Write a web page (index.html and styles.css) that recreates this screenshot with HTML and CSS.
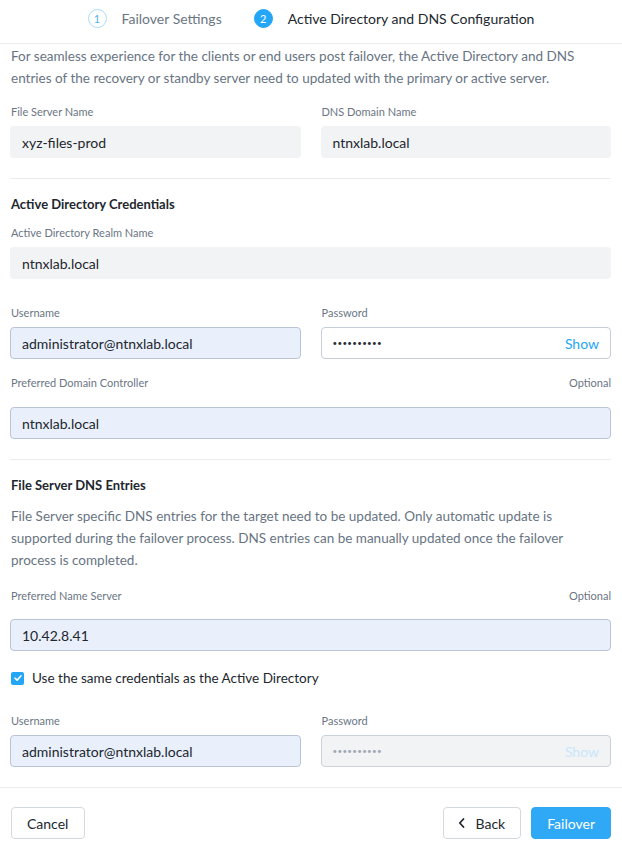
FILE: index.html
```html
<!DOCTYPE html>
<html>
<head>
<meta charset="utf-8">
<link rel="stylesheet" href="styles.css">
</head>
<body>
<div class="page">
  <header class="steps">
    <div class="step">
      <span class="step-num">1</span>
      <span class="step-label">Failover Settings</span>
    </div>
    <div class="step active">
      <span class="step-num">2</span>
      <span class="step-label">Active Directory and DNS Configuration</span>
    </div>
  </header>

  <main class="content">
    <p class="desc intro">For seamless experience for the clients or end users post failover, the Active Directory and DNS entries of the recovery or standby server need to updated with the primary or active server.</p>

    <div class="row first-row">
      <div class="field">
        <div class="label">File Server Name</div>
        <div class="input readonly">xyz-files-prod</div>
      </div>
      <div class="field">
        <div class="label">DNS Domain Name</div>
        <div class="input readonly">ntnxlab.local</div>
      </div>
    </div>

    <hr class="divider">

    <h3 class="section-title">Active Directory Credentials</h3>

    <div class="field single realm">
      <div class="label">Active Directory Realm Name</div>
      <div class="input readonly">ntnxlab.local</div>
    </div>

    <div class="row gap-top">
      <div class="field">
        <div class="label">Username</div>
        <div class="input filled">administrator@ntnxlab.local</div>
      </div>
      <div class="field">
        <div class="label">Password</div>
        <div class="input pass"><span class="dots">••••••••••</span><span class="show">Show</span></div>
      </div>
    </div>

    <div class="field single opt-field">
      <div class="label-row"><span class="label">Preferred Domain Controller</span><span class="label">Optional</span></div>
      <div class="input filled">ntnxlab.local</div>
    </div>

    <hr class="divider">

    <h3 class="section-title">File Server DNS Entries</h3>
    <p class="desc dns-desc">File Server specific DNS entries for the target need to be updated. Only automatic update is supported during the failover process. DNS entries can be manually updated once the failover process is completed.</p>

    <div class="field single opt-field ns">
      <div class="label-row"><span class="label">Preferred Name Server</span><span class="label">Optional</span></div>
      <div class="input filled">10.42.8.41</div>
    </div>

    <label class="check">
      <span class="box"><svg width="10" height="10" viewBox="0 0 10 10"><path d="M2 5.2 L4.1 7.2 L8 2.8" fill="none" stroke="#fff" stroke-width="1.6" stroke-linecap="round" stroke-linejoin="round"/></svg></span>
      <span class="check-text">Use the same credentials as the Active Directory</span>
    </label>

    <div class="row cred2">
      <div class="field">
        <div class="label">Username</div>
        <div class="input filled">administrator@ntnxlab.local</div>
      </div>
      <div class="field">
        <div class="label">Password</div>
        <div class="input pass disabled"><span class="dots">••••••••••</span><span class="show">Show</span></div>
      </div>
    </div>
  </main>

  <footer class="footer">
    <button class="btn cancel">Cancel</button>
    <div class="footer-right">
      <button class="btn back"><svg width="10" height="12" viewBox="0 0 10 12"><path d="M6.5 2 L2.8 6 L6.5 10" fill="none" stroke="#22272e" stroke-width="1.8" stroke-linecap="round" stroke-linejoin="round"/></svg>Back</button>
      <button class="btn primary">Failover</button>
    </div>
  </footer>
</div>
</body>
</html>
```

FILE: styles.css
```css
* { box-sizing: border-box; }
html, body { margin: 0; padding: 0; background: #fff; }
body {
  font-family: Lato, "Open Sans", sans-serif;
  color: #22272e;
  width: 622px;
  height: 857px;
  overflow: hidden;
}
.page { display: flex; flex-direction: column; }

.steps {
  height: 44px;
  border-bottom: 1px solid #ececec;
  display: flex;
  align-items: center;
  justify-content: center;
  gap: 32px;
  padding-left: 0;
  padding-bottom: 6px;
}
.step { display: flex; align-items: center; gap: 15px; }
.step-num {
  width: 19px; height: 19px;
  border-radius: 50%;
  border: 1px solid #abdcfb;
  color: #4cb3f5;
  font-size: 11px;
  display: flex; align-items: center; justify-content: center;
}
.step-label { font-size: 14px; color: #6b7684; }
.step.active .step-num { background: #23a6f5; border-color: #23a6f5; color: #fff; }
.step.active .step-label { color: #22272e; }

.content { padding: 0 11px 0 10px; display: flex; flex-direction: column; }

.desc {
  margin: 0;
  font-size: 13.5px;
  line-height: 22px;
  color: #687482;
  padding-left: 1px;
}
.intro { margin-top: 1px; }

.row { display: flex; gap: 20px; }
.row .field { flex: 1; }
.first-row { margin-top: 16px; }

.label {
  font-size: 11px;
  line-height: 14px;
  color: #6b7684;
  padding-left: 1px;
}
.field .label { display: block; margin-bottom: 7px; }
.label-row { display: flex; justify-content: space-between; margin-bottom: 17px; }
.label-row .label { margin-bottom: 0; }

.input {
  height: 32px;
  border-radius: 4px;
  border: 1px solid transparent;
  font-size: 14px;
  padding: 0 11px;
  display: flex;
  align-items: center;
  color: #22272e;
}
.input.readonly { background: #f2f3f5; }
.input.filled { background: #e9f0fc; border-color: #b9c4d6; }
.input.pass { background: #fff; border-color: #c8ced7; justify-content: space-between; }
.dots { font-size: 8px; letter-spacing: 0.3px; color: #2a2f36; }
.show { color: #23a6f5; font-size: 14px; }
.input.pass.disabled { background: #f2f3f5; border-color: #ccd2da; }
.input.pass.disabled .dots { color: #a0a9b4; }
.input.pass.disabled .show { color: #c9e6fb; }

.divider {
  border: 0;
  border-top: 1px solid #ececec;
  margin: 20px 0 0;
  height: 0;
}
.section-title {
  margin: 17px 0 0;
  font-size: 13px;
  line-height: 16px;
  font-weight: 700;
  padding-left: 1px;
}
.realm { margin-top: 14px; }
.gap-top { margin-top: 27px; }
.opt-field { margin-top: 17px; }
.dns-desc { margin-top: 12px; }
.ns { margin-top: 18px; }
.ns .label-row { margin-bottom: 16px; }

.check {
  display: flex; align-items: center; gap: 8px;
  margin-top: 20px;
  padding-left: 1px;
}
.box {
  width: 13px; height: 13px;
  border-radius: 2px;
  background: #23a6f5;
  display: flex; align-items: center; justify-content: center;
}
.check-text { font-size: 13.5px; color: #22272e; line-height: 14px; }

.cred2 { margin-top: 29px; }

.footer {
  margin-top: 20px;
  border-top: 1px solid #ececec;
  padding: 19px 11px 0 11px;
  display: flex;
  justify-content: space-between;
}
.footer-right { display: flex; gap: 10px; }
.btn {
  height: 32px;
  border: 1px solid #d3d8de;
  border-radius: 4px;
  background: #fff;
  font-family: Lato, "Open Sans", sans-serif;
  font-size: 14px;
  color: #22272e;
  padding: 0 14px;
  display: flex; align-items: center; gap: 7px;
}
.btn.cancel { padding: 0 16px 0 15px; }
.btn.back { padding: 0 15px 0 13px; gap: 8px; }
.btn.primary { background: #2fa8f5; border-color: #2fa8f5; color: #fff; padding: 0 15px; }
```
